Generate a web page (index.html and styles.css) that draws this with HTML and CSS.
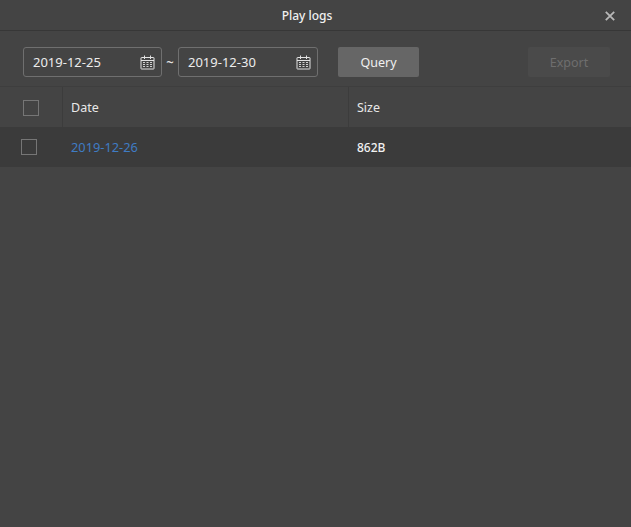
FILE: index.html
```html
<!DOCTYPE html>
<html lang="en">
<head>
<meta charset="utf-8">
<title>Play logs</title>
<link rel="stylesheet" href="styles.css">
</head>
<body>
<svg class="defs" width="0" height="0" aria-hidden="true">
  <symbol id="cal" viewBox="0 0 15 15">
    <path d="M1.5 2.5h12a.5.5 0 0 1 .5.5v10.5a.5.5 0 0 1-.5.5h-12a.5.5 0 0 1-.5-.5V3a.5.5 0 0 1 .5-.5zM1 5.5h13M4.5 .5v3.5M10.5 .5v3.5" fill="none" stroke="#e2e2e2" stroke-width="1"/>
    <path d="M3 7.5h2M6.5 7.5h2M10 7.5h2M3 9.5h2M6.5 9.5h2M10 9.5h2M3 11.5h2M6.5 11.5h2M10 11.5h2" fill="none" stroke="#d0d0d0" stroke-width="1"/>
  </symbol>
</svg>
<main class="dialog">
  <header class="titlebar">
    <h1 class="title">Play logs</h1>
    <button class="close" type="button" aria-label="Close">
      <svg width="10" height="10" viewBox="0 0 10 10"><path d="M.8.8l8.4 8.4M9.2.8L.8 9.2" stroke="#b8b8b8" stroke-width="1.8" fill="none"/></svg>
    </button>
  </header>
  <section class="toolbar">
    <div class="range">
      <div class="date-input"><span>2019-12-25</span><svg class="cal" width="15" height="15"><use href="#cal"/></svg></div>
      <span class="tilde">~</span>
      <div class="date-input date-end"><span>2019-12-30</span><svg class="cal" width="15" height="15"><use href="#cal"/></svg></div>
    </div>
    <button class="btn query" type="button">Query</button>
    <button class="btn export" type="button" disabled>Export</button>
  </section>
  <div class="table">
    <div class="row head">
      <div class="cell check"><span class="box head-box"></span></div>
      <div class="cell date">Date</div>
      <div class="cell size">Size</div>
    </div>
    <div class="row body-row">
      <div class="cell check"><span class="box"></span></div>
      <div class="cell date"><a class="link" href="#">2019-12-26</a></div>
      <div class="cell size">862B</div>
    </div>
  </div>
</main>
</body>
</html>
```
FILE: styles.css
```css
* { box-sizing: border-box; }
html, body { margin: 0; height: 100%; }
body {
  background: #444444;
  color: #f2f2f2;
  font-family: "Noto Sans", "Open Sans", "Liberation Sans", sans-serif;
  font-size: 13px;
  overflow: hidden;
}
.defs { position: absolute; }
.dialog { height: 527px; display: flex; flex-direction: column; }
.titlebar {
  height: 31px;
  flex: none;
  display: flex;
  align-items: center;
  justify-content: center;
  padding-right: 17px;
  position: relative;
  border-bottom: 1px solid #373737;
}
.title { margin: 0; font-size: 12px; font-weight: 500; color: #f0f0f0; }
.close {
  position: absolute;
  right: 16px;
  top: 11px;
  width: 10px;
  height: 10px;
  padding: 0;
  border: 0;
  background: none;
  display: flex;
}
.toolbar {
  height: 56px;
  flex: none;
  display: flex;
  align-items: flex-start;
  padding: 16px 21px 0 23px;
  border-bottom: 1px solid #3e3e3e;
}
.range { display: flex; align-items: center; }
.date-input {
  width: 139px;
  height: 30px;
  border: 1px solid #6f6f6f;
  border-radius: 3px;
  display: flex;
  align-items: center;
  justify-content: space-between;
  padding: 0 6px 0 9px;
  color: #ececec;
}
.date-end { width: 140px; }
.cal { display: block; }
.tilde { width: 16px; text-align: center; color: #e0e0e0; font-weight: 600; }
.btn {
  height: 30px;
  border: 0;
  border-radius: 2px;
  font: inherit;
  font-size: 12.5px;
  padding: 0;
}
.query { width: 81px; margin-left: 20px; background: #666; color: #f0f0f0; }
.export { width: 82px; margin-left: auto; background: #4a4a4a; color: #6e6e6e; }
.row { display: flex; height: 40px; align-items: stretch; }
.cell { display: flex; align-items: center; }
.check { width: 63px; flex: none; }
.date { width: 286px; flex: none; padding-left: 8px; }
.size { padding-left: 8px; }
.head .check, .head .date { border-right: 1px solid #3c3c3c; }
.head { color: #e8e8e8; font-size: 12.5px; }
.body-row { background: #3b3b3b; }
.body-row .size { font-size: 12px; font-weight: 500; }
.box {
  width: 16px;
  height: 16px;
  border: 1px solid #767676;
  margin-left: 21px;
  display: block;
}
.head-box { margin-left: 23px; margin-top: 2px; }
.link { color: #3f7cc4; text-decoration: none; font-size: 12.8px; }
```
